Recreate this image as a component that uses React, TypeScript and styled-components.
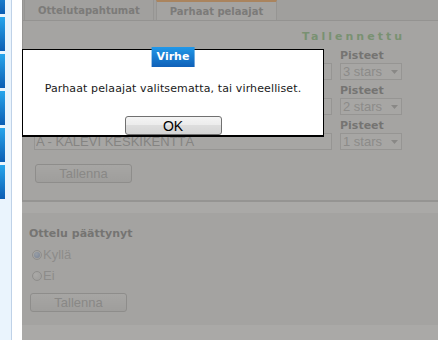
import React from 'react'
import styled, { createGlobalStyle } from 'styled-components'

const GlobalStyle = createGlobalStyle`
  html, body {
    margin: 0;
    padding: 0;
    background: #fff;
  }
  body {
    width: 438px;
    height: 340px;
    overflow: hidden;
    font-family: 'DejaVu Sans', Verdana, sans-serif;
  }
`

const Page = styled.div`
  display: flex;
  width: 438px;
  height: 340px;
`

const Sidebar = styled.div`
  flex: none;
  width: 11px;
  background: #eaf4fd;
  border-right: 1px solid #bfd2e8;
  overflow: hidden;
`

const NavStack = styled.div`
  display: flex;
  flex-direction: column;
  gap: 3px;
  width: 5px;
  margin-top: -20px;
`

const NavButton = styled.div`
  height: 34px;
  background: linear-gradient(#27a5ec, #0c5db3);
`

const Main = styled.div`
  position: relative;
  flex: 1;
  margin-left: 10px;
  display: flex;
  flex-direction: column;
`

const Card = styled.div`
  border-left: 1px solid #d2d2d2;
  border-bottom: 2px solid #d4d4d4;
  background: #f5f5f5;
`

const TabBar = styled.div`
  display: flex;
  gap: 2px;
  height: 20px;
  padding-left: 1px;
  background: #ebebeb;
  border-bottom: 1px solid #d2d2d2;
`

const Tab = styled.div<{ $active?: boolean }>`
  display: flex;
  align-items: center;
  padding: 0 13px;
  font-size: 10px;
  font-weight: bold;
  color: #a2a2a2;
  background: ${({ $active }) => ($active ? '#f3f3f3' : '#ececec')};
  border: 1px solid #d6d6d6;
  border-top: ${({ $active }) => ($active ? '2px solid #ffb46c' : 'none')};
  border-bottom: none;
`

const PanelBody = styled.div`
  padding: 9px 36px 17px 11px;
`

const SavedNote = styled.div`
  text-align: right;
  font-size: 11px;
  line-height: 13px;
  font-weight: bold;
  letter-spacing: 3px;
  margin-right: -3px;
  color: #9ccf94;
`

const FieldList = styled.div`
  display: flex;
  flex-direction: column;
  gap: 4px;
  margin-top: 6px;
`

const FieldRow = styled.div`
  display: flex;
  align-items: flex-end;
  gap: 8px;
`

const TextBox = styled.input`
  flex: 1;
  min-width: 0;
  height: 17px;
  box-sizing: border-box;
  margin: 0;
  padding: 0 1px;
  border: 1px solid #d6d6d6;
  background: #f9f9f9;
  font: 13px 'Liberation Sans', Arial, sans-serif;
  color: #b4b4b4;
  outline: none;
`

const PointsCol = styled.div`
  width: 62px;
  display: flex;
  flex-direction: column;
  gap: 1px;
`

const FieldLabel = styled.div`
  font-size: 11px;
  line-height: 13px;
  font-weight: bold;
  color: #959595;
`

const SelectBox = styled.div`
  height: 17px;
  box-sizing: border-box;
  display: flex;
  align-items: center;
  justify-content: space-between;
  padding: 0 3px 0 2px;
  border: 1px solid #d6d6d6;
  background: #f9f9f9;
  font: 13px 'Liberation Sans', Arial, sans-serif;
  color: #c2c2c2;
`

const SaveButton = styled.button<{ $top: number }>`
  display: block;
  width: 97px;
  height: 19px;
  margin: ${({ $top }) => $top}px 0 0 1px;
  padding: 0;
  border: 1px solid #c6c6c6;
  border-radius: 3px;
  background: linear-gradient(#f8f8f8, #e8e8e8);
  font: 13px 'Liberation Sans', Arial, sans-serif;
  color: #bcbcbc;
`

const Section = styled.div`
  margin-top: 11px;
  background: #f3f3f3;
  padding: 14px 0 13px 7px;
`

const SectionTitle = styled.div`
  font-size: 11px;
  line-height: 13px;
  font-weight: bold;
  color: #959595;
  margin-bottom: 4px;
`

const RadioRow = styled.div`
  display: flex;
  align-items: center;
  gap: 1px;
  height: 21px;
  padding-left: 3px;
  font: 13px 'Liberation Sans', Arial, sans-serif;
  color: #c4c4c4;
`

const RadioDot = styled.span<{ $checked?: boolean }>`
  position: relative;
  width: 10px;
  height: 10px;
  box-sizing: border-box;
  border-radius: 50%;
  border: 1px solid #c6c6c6;
  background: radial-gradient(circle at 35% 35%, #ffffff, #e4e4e4);

  &::after {
    content: '';
    display: ${({ $checked }) => ($checked ? 'block' : 'none')};
    position: absolute;
    left: 1px;
    top: 1px;
    width: 6px;
    height: 6px;
    border-radius: 50%;
    background: radial-gradient(circle at 40% 35%, #dce8fa, #9bb4dc);
  }
`

const Overlay = styled.div`
  position: absolute;
  inset: 0;
  z-index: 1;
  background: rgba(85, 83, 79, 0.5);
`

const Dialog = styled.div`
  position: absolute;
  left: 0;
  top: 49px;
  z-index: 2;
  width: 302px;
  height: 88px;
  box-sizing: border-box;
  border: 1px solid #000;
  border-bottom-width: 2px;
  background: #fff;
  display: flex;
  flex-direction: column;
  align-items: center;
  padding-top: 32px;
`

const DialogTitle = styled.div`
  position: absolute;
  top: -3px;
  left: 50%;
  transform: translateX(-50%);
  height: 20px;
  line-height: 20px;
  padding: 0 5px;
  background: linear-gradient(#2198e8, #0f60b8);
  color: #fff;
  font-size: 11px;
  font-weight: bold;
`

const DialogMessage = styled.div`
  font-size: 11px;
  line-height: 14px;
  letter-spacing: 0.12px;
  color: #1a1a1a;
`

const OkButton = styled.button`
  width: 97px;
  height: 19px;
  margin-top: 20px;
  padding: 0;
  border: 1px solid #707070;
  border-radius: 3px;
  background: linear-gradient(#f4f4f4, #ebebeb 50%, #dddddd 50%, #d4d4d4);
  font: 14px 'Liberation Sans', Arial, sans-serif;
  color: #000;
`

const Arrow = () => (
  <svg width="7" height="4" viewBox="0 0 7 4">
    <path d="M0 0H7L3.5 4Z" fill="#bdbdbd" />
  </svg>
)

const rows = [
  { player: '', stars: '3 stars' },
  { player: '', stars: '2 stars' },
  { player: 'A - KALEVI KESKIKENTTÄ', stars: '1 stars' },
]

const App: React.FC = () => {
  return (
    <>
      <GlobalStyle />
      <Page>
        <Sidebar>
          <NavStack>
            {[0, 1, 2, 3, 4, 5].map((i) => (
              <NavButton key={i} />
            ))}
          </NavStack>
        </Sidebar>
        <Main>
          <Card>
            <TabBar>
              <Tab>Ottelutapahtumat</Tab>
              <Tab $active>Parhaat pelaajat</Tab>
            </TabBar>
            <PanelBody>
              <SavedNote>Tallennettu</SavedNote>
              <FieldList>
                {rows.map((row, i) => (
                  <FieldRow key={i}>
                    <TextBox readOnly defaultValue={row.player} />
                    <PointsCol>
                      <FieldLabel>Pisteet</FieldLabel>
                      <SelectBox>
                        {row.stars}
                        <Arrow />
                      </SelectBox>
                    </PointsCol>
                  </FieldRow>
                ))}
              </FieldList>
              <SaveButton $top={14}>Tallenna</SaveButton>
            </PanelBody>
          </Card>
          <Section>
            <SectionTitle>Ottelu päättynyt</SectionTitle>
            <RadioRow>
              <RadioDot $checked />
              Kyllä
            </RadioRow>
            <RadioRow>
              <RadioDot />
              Ei
            </RadioRow>
            <SaveButton $top={7}>Tallenna</SaveButton>
          </Section>
          <Overlay />
          <Dialog>
            <DialogTitle>Virhe</DialogTitle>
            <DialogMessage>Parhaat pelaajat valitsematta, tai virheelliset.</DialogMessage>
            <OkButton>OK</OkButton>
          </Dialog>
        </Main>
      </Page>
    </>
  )
}

export default App
